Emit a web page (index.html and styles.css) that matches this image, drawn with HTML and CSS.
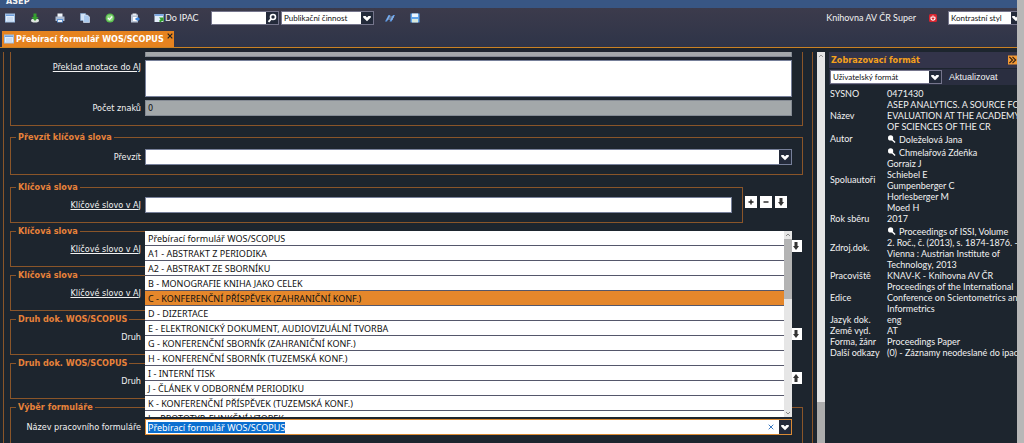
FILE: index.html
```html
<!DOCTYPE html>
<html lang="cs">
<head>
<meta charset="utf-8">
<title>ASEP</title>
<link rel="stylesheet" href="styles.css">
</head>
<body>
<svg class="defs" aria-hidden="true">
  <symbol id="chev" viewBox="0 0 10 10"><path d="M1.2 3h2.4L5 4.4 6.400 3h2.400v1.600L5 8.200 1.200 4.600z" fill="#fff"/></symbol>
  <symbol id="down" viewBox="0 0 10 10"><path d="M3.500 1h3v4H8L5 9 2 5h1.500z" fill="#333"/></symbol>
  <symbol id="up" viewBox="0 0 10 10"><path d="M3.500 9h3V5H8L5 1 2 5h1.500z" fill="#333"/></symbol>
  <symbol id="plus" viewBox="0 0 10 10"><path d="M4.300 2.500h1.400v1.800h1.800v1.400H5.700v1.800H4.300V5.700H2.500V4.300h1.800z" fill="#222"/></symbol>
  <symbol id="minus" viewBox="0 0 10 10"><path d="M2.500 4.300h5v1.400h-5z" fill="#222"/></symbol>
  <symbol id="mag" viewBox="0 0 10 10"><circle cx="4" cy="3.800" r="2.900" fill="#fff"/><path d="M5.500 5.500L9 9" stroke="#fff" stroke-width="1.500"/></symbol>
  <symbol id="win" viewBox="0 0 10 10"><rect x=".5" y="1" width="9" height="8" fill="#e4effb" stroke="#9fbfe4"/><path d="M1 1.500h8v1.500H1z" fill="#6f9fdc"/><path d="M2 5h6M2 7h6" stroke="#b4cdec"/></symbol>
</svg>
<div class="app">
  <header class="titlebar"><span>ASEP</span></header>
  <div class="top">
    <div class="toolbar">
      <div class="tools">
        <button class="tool" aria-label="Formulář"><svg><use href="#win"/></svg></button>
        <button class="tool" aria-label="Stáhnout"><svg viewBox="0 0 10 10"><ellipse cx="5" cy="7.600" rx="4" ry="2" fill="#dfe6e0"/><path d="M3.500.5h3V4h2L5 8 1.500 4h2z" fill="#35a02f"/></svg></button>
        <button class="tool" aria-label="Tisk"><svg viewBox="0 0 10 10"><path d="M2.500.5h5V4h-5z" fill="#f1f6fb"/><path d="M.5 3.500h9V8h-9z" fill="#aebdd2"/><path d="M2 6h6v3.500H2z" fill="#5e93d4"/><path d="M3 7h4v2H3z" fill="#e7f0fa"/></svg></button>
        <button class="tool" aria-label="Kopírovat"><svg viewBox="0 0 10 10"><path d="M.5.5h5v7h-5z" fill="#cfe2f7" stroke="#85acd8" stroke-width=".6"/><path d="M3.500 2h4L9.500 4v5.500h-6z" fill="#a9c9ee" stroke="#e5f0fc" stroke-width=".6"/></svg></button>
        <button class="tool" aria-label="Potvrdit"><svg viewBox="0 0 10 10"><circle cx="5" cy="5" r="4.500" fill="#58bd4c"/><circle cx="5" cy="5" r="3.300" fill="#8ad77d"/><path d="M3 5l1.500 1.600L7.200 3.500" fill="none" stroke="#fff" stroke-width="1.300"/></svg></button>
        <button class="tool" aria-label="Schránka"><svg viewBox="0 0 10 10"><path d="M1 1.500h7v8H1z" fill="#b8c3d4"/><path d="M2.500.5h4v2h-4z" fill="#e9edf4"/><path d="M3 4h3.500v4H3z" fill="#fff"/><path d="M5.500 5h2V3.500L10 6 7.500 8.500V7h-2z" fill="#3f86dc"/></svg></button>
        <button class="tool wide"><svg viewBox="0 0 10 10"><path d="M.5 1h9v8h-9z" fill="#e3eefb"/><path d="M.5 1h9v2h-9z" fill="#7fa9e0"/><path d="M5 4.500h4.500V9L8.200 7.800 6.500 9.500 5 8l1.600-1.700z" fill="#33a12c"/></svg>Do IPAC</button>
      </div>
      <div class="box search"><input type="text" aria-label="Hledat"><button aria-label="Hledat"><svg viewBox="0 0 10 10"><circle cx="6" cy="4" r="2.500" fill="none" stroke="#fff" stroke-width="1.600"/><path d="M4.200 5.800L1.500 8.800" stroke="#fff" stroke-width="1.800"/></svg></button></div>
      <div class="box kind"><select aria-label="Databáze"><option>Publikační činnost</option></select><span class="arr"><svg><use href="#chev"/></svg></span></div>
      <div class="tools end">
        <button class="tool" aria-label="Porovnat"><svg viewBox="0 0 10 10"><path d="M0 8.500L3.500 2h2L2 8.500zM4.500 8.500L8 2h2L6.500 8.500z" fill="#5f9be6"/><path d="M2 6h6M3 4h6" stroke="#a9cbf3" stroke-width=".8"/></svg></button>
        <button class="tool" aria-label="Uložit"><svg viewBox="0 0 10 10"><path d="M.5.5h9v9h-9z" fill="#5fa3ea"/><path d="M2 .5h6V4H2z" fill="#e9f4ff"/><path d="M2 6h6v3.500H2z" fill="#d8e9dc"/></svg></button>
      </div>
      <span class="user">Knihovna AV ČR Super</span>
      <button class="tool power" aria-label="Odhlásit"><svg viewBox="0 0 10 10"><rect x="1" y="1" width="8" height="8" rx="1.500" fill="#d62530"/><path d="M3.600 3.800a2 2 0 1 0 2.800 0M5 2.500v2.500" fill="none" stroke="#fff" stroke-width="1.200"/></svg></button>
      <div class="box style"><select aria-label="Styl"><option>Kontrastní styl</option></select><span class="arr"><svg><use href="#chev"/></svg></span></div>
    </div>
    <div class="tabs"><div class="tab"><svg><use href="#win"/></svg><span>Přebírací formulář WOS/SCOPUS</span><button aria-label="Zavřít"><svg viewBox="0 0 6 6"><path d="M.7.7l4.600 4.600M5.300.7L.7 5.300" stroke="#222" stroke-width="1.200"/></svg></button></div></div>
  </div>
  <main class="main">
    <form class="form">
      <div class="page">
        <fieldset class="annot">
          <div class="row"><label for="n1">Počet znaků</label><input id="n1" class="grey" value="0" readonly></div>
          <div class="row tall"><label for="an"><u>Překlad anotace do AJ</u></label><textarea id="an"></textarea></div>
          <div class="row"><label for="n2">Počet znaků</label><input id="n2" class="grey" value="0" readonly></div>
        </fieldset>
        <fieldset class="full">
          <legend>Převzít klíčová slova</legend>
          <div class="row"><label for="pr">Převzít</label><div class="combo"><input id="pr"><button type="button" aria-label="Otevřít"><svg><use href="#chev"/></svg></button></div></div>
        </fieldset>
        <div class="line">
          <fieldset><legend>Klíčová slova</legend><div class="row"><label for="k1"><u>Klíčové slovo v AJ</u></label><input id="k1"></div></fieldset>
          <div class="acts"><button type="button" aria-label="Přidat"><svg><use href="#plus"/></svg></button><button type="button" aria-label="Odebrat"><svg><use href="#minus"/></svg></button><button type="button" aria-label="Dolů"><svg><use href="#down"/></svg></button></div>
        </div>
        <div class="line">
          <fieldset><legend>Klíčová slova</legend><div class="row"><label for="k2"><u>Klíčové slovo v AJ</u></label><input id="k2"></div></fieldset>
          <div class="acts"><button type="button" aria-label="Přidat"><svg><use href="#plus"/></svg></button><button type="button" aria-label="Odebrat"><svg><use href="#minus"/></svg></button><button type="button" aria-label="Nahoru"><svg><use href="#up"/></svg></button><button type="button" aria-label="Dolů"><svg><use href="#down"/></svg></button></div>
        </div>
        <div class="line">
          <fieldset><legend>Klíčová slova</legend><div class="row"><label for="k3"><u>Klíčové slovo v AJ</u></label><input id="k3"></div></fieldset>
          <div class="acts"><button type="button" aria-label="Přidat"><svg><use href="#plus"/></svg></button><button type="button" aria-label="Odebrat"><svg><use href="#minus"/></svg></button><button type="button" aria-label="Nahoru"><svg><use href="#up"/></svg></button></div>
        </div>
        <div class="line">
          <fieldset><legend>Druh dok. WOS/SCOPUS</legend><div class="row"><label for="d1">Druh</label><input id="d1"></div></fieldset>
          <div class="acts"><button type="button" aria-label="Hledat"><svg><use href="#plus"/></svg></button><button type="button" aria-label="Přidat"><svg><use href="#plus"/></svg></button><button type="button" aria-label="Odebrat"><svg><use href="#minus"/></svg></button><button type="button" aria-label="Dolů"><svg><use href="#down"/></svg></button></div>
        </div>
        <div class="line">
          <fieldset><legend>Druh dok. WOS/SCOPUS</legend><div class="row"><label for="d2">Druh</label><input id="d2"></div></fieldset>
          <div class="acts"><button type="button" aria-label="Hledat"><svg><use href="#plus"/></svg></button><button type="button" aria-label="Přidat"><svg><use href="#plus"/></svg></button><button type="button" aria-label="Odebrat"><svg><use href="#minus"/></svg></button><button type="button" aria-label="Nahoru"><svg><use href="#up"/></svg></button></div>
        </div>
        <fieldset class="full">
          <legend>Výběr formuláře</legend>
          <div class="row"><label for="wf">Název pracovního formuláře</label>
            <div class="combo open">
              <input id="wf" value="Přebírací formulář WOS/SCOPUS" spellcheck="false">
              <button type="button" class="clear" aria-label="Vymazat"><svg viewBox="0 0 6 6"><path d="M.7.7l4.600 4.600M5.300.7L.7 5.300" stroke="#3a78c0"/></svg></button>
              <button type="button" aria-label="Otevřít"><svg><use href="#chev"/></svg></button>
              <div class="menu">
                <ul>
                  <li>Přebírací formulář WOS/SCOPUS</li>
                  <li>A1 - ABSTRAKT Z PERIODIKA</li>
                  <li>A2 - ABSTRAKT ZE SBORNÍKU</li>
                  <li>B - MONOGRAFIE KNIHA JAKO CELEK</li>
                  <li class="on">C - KONFERENČNÍ PŘÍSPĚVEK (ZAHRANIČNÍ KONF.)</li>
                  <li>D - DIZERTACE</li>
                  <li>E - ELEKTRONICKÝ DOKUMENT, AUDIOVIZUÁLNÍ TVORBA</li>
                  <li>G - KONFERENČNÍ SBORNÍK (ZAHRANIČNÍ KONF.)</li>
                  <li>H - KONFERENČNÍ SBORNÍK (TUZEMSKÁ KONF.)</li>
                  <li>I - INTERNÍ TISK</li>
                  <li>J - ČLÁNEK V ODBORNÉM PERIODIKU</li>
                  <li>K - KONFERENČNÍ PŘÍSPĚVEK (TUZEMSKÁ KONF.)</li>
                  <li>L - PROTOTYP, FUNKČNÍ VZOREK</li>
                </ul>
                <div class="bar"><svg viewBox="0 0 8 8"><path d="M2 5l2-2 2 2" fill="none" stroke="#888"/></svg><i></i><svg viewBox="0 0 8 8"><path d="M2 3l2 2 2-2" fill="none" stroke="#888"/></svg></div>
              </div>
            </div>
          </div>
        </fieldset>
      </div>
    </form>
    <div class="scroll"><svg viewBox="0 0 8 8"><path d="M2 5l2-2 2 2" fill="none" stroke="#999"/></svg><i></i></div>
    <aside class="side">
      <h2><span>Zobrazovací formát</span><button aria-label="Sbalit"><svg viewBox="0 0 10 10"><rect width="10" height="10" fill="#f59a35"/><path d="M1.500 1.500L5 5 1.500 8.500M5 1.500L8.500 5 5 8.500" fill="none" stroke="#3a2410" stroke-width="1.400"/></svg></button></h2>
      <div class="fmt"><div class="box"><select aria-label="Formát"><option>Uživatelský formát</option></select><span class="arr"><svg><use href="#chev"/></svg></span></div><button>Aktualizovat</button></div>
      <table>
        <tr><th>SYSNO</th><td>0471430</td></tr>
        <tr><th>Název</th><td>ASEP ANALYTICS. A SOURCE FOR<br>EVALUATION AT THE ACADEMY<br>OF SCIENCES OF THE CR</td></tr>
        <tr><th>Autor</th><td><div class="ref"><svg><use href="#mag"/></svg>Doleželová Jana</div></td></tr>
        <tr><th>Spoluautoři</th><td><div class="ref"><svg><use href="#mag"/></svg>Chmelařová Zdeňka</div>Gorraiz J<br>Schiebel E<br>Gumpenberger C<br>Horlesberger M<br>Moed H</td></tr>
        <tr><th>Rok sběru</th><td>2017</td></tr>
        <tr><th>Zdroj.dok.</th><td><div class="ref"><svg><use href="#mag"/></svg>Proceedings of ISSI, Volume</div>2. Roč., č. (2013), s. 1874-1876. -<br>Vienna : Austrian Institute of<br>Technology, 2013</td></tr>
        <tr><th>Pracoviště</th><td>KNAV-K - Knihovna AV ČR</td></tr>
        <tr><th>Edice</th><td>Proceedings of the International<br>Conference on Scientometrics and<br>Informetrics</td></tr>
        <tr><th>Jazyk dok.</th><td>eng</td></tr>
        <tr><th>Země vyd.</th><td>AT</td></tr>
        <tr><th>Forma, žánr</th><td>Proceedings Paper</td></tr>
        <tr><th>Další odkazy</th><td>(0) - Záznamy neodeslané do ipac</td></tr>
      </table>
    </aside>
  </main>
</div>
<script src="main.js"></script>
</body>
</html>
```
FILE: styles.css
```css
* { box-sizing: border-box; }
body { margin: 0; background: #b7b7b7; color: #f2f2f2; font: 9px/11px "DejaVu Sans Condensed", "Noto Sans", sans-serif; }
button, input, select, textarea { font: inherit; margin: 0; padding: 0; border: 0; border-radius: 0; outline: 0; background: none; color: inherit; }
select { appearance: none; }
svg { display: block; flex: none; width: 10px; height: 10px; }
.defs { position: absolute; width: 0; height: 0; }
.app { display: flex; flex-direction: column; height: 100vh; margin-right: 7px; overflow: hidden; background: #1d252e; }

.titlebar { display: flex; align-items: flex-end; height: 8px; padding-left: 6px; overflow: hidden; background: #385684; font-weight: bold; line-height: 12px; }
.titlebar span { margin-bottom: 1px; }
.top { display: flex; flex-direction: column; height: 40px; background: linear-gradient(#3c3b4c, #2e3448); border-bottom: 1px solid #c98224; }
.toolbar { display: flex; align-items: center; height: 23px; padding: 0 0 4px 5px; font-family: Lato, sans-serif; }
.tools { display: flex; gap: 15px; width: 206px; }
.tools.end { width: auto; margin-left: 11px; }
.tool { display: flex; align-items: center; gap: 1px; white-space: nowrap; }
.wide { margin-left: -1px; }
.box { display: flex; height: 14px; border: 1px solid #75758c; background: #fff; color: #111; font: 8px/12px Lato, sans-serif; }
.box input, .box select { flex: 1; min-width: 0; padding-left: 2px; }
.box button, .arr { display: flex; align-items: center; justify-content: center; width: 12px; background: #232a3a; }
.search { width: 68px; margin-right: 2px; }
.kind { width: 93px; }
.user { margin-left: auto; }
.power { margin: 0 10px 0 12px; }
.style { width: 69px; border-right: 0; }
.style .arr { width: 6px; overflow: hidden; justify-content: flex-start; }
.tabs { display: flex; flex: 1; padding-left: 2px; }
.tab { display: flex; align-items: center; padding-left: 2px; gap: 2px; background: #e6831f; color: #fff; font-weight: bold; }
.tab button { align-self: flex-start; padding: 2px 1px; }
.tab button svg { width: 6px; height: 6px; }

.main { display: flex; flex: 1; min-height: 0; padding-top: 4px; }
.form { flex: 1; min-width: 0; overflow: hidden; padding: 0 4px 0 3px; }
.page { padding: 0 9px 0 6px; border: solid #8a5529; border-width: 0 1px; }
fieldset { flex: 1; min-width: 0; margin: 0; padding: 4px 10px 9px; border: 1px solid #8a5529; }
legend { margin-left: -5px; padding: 0 2px; color: #e8823a; font-weight: bold; line-height: 12px; }
.annot { display: flex; flex-direction: column; gap: 3px; margin: -11px 0 5px; padding: 0 10px 9px; border-top: 0; }
.full { margin-bottom: 6px; padding-top: 6px; }
.row { display: flex; height: 16px; align-items: center; }
.row.tall { height: 37px; align-items: flex-start; }
.tall label { padding-top: 2px; }
.row label { flex: none; width: 120px; margin-right: 4px; text-align: right; white-space: nowrap; }
.row > input, .row > textarea, .combo { flex: 1; align-self: stretch; min-width: 0; border: 1px solid #77809a; background: #fff; color: #111; padding-left: 2px; resize: none; }
.row > .grey { background: #a3a8aa; border-color: #858b94; }
.combo { display: flex; align-items: center; position: relative; }
.combo input { flex: 1; min-width: 0; }
.combo button { display: flex; align-items: center; justify-content: center; align-self: stretch; width: 12px; background: #232a3a; }
.combo .clear { width: 17px; background: #fff; }
.clear svg { width: 6px; height: 6px; }
.open { border-color: #d98a35; font-family: "Noto Sans", sans-serif; }
.open input::selection { background: #0b6fd0; color: #fff; }
.line { display: flex; margin-bottom: 2px; }
.acts { display: flex; gap: 3px; width: 60px; padding: 15px 0 0 2px; }
.acts button { display: flex; align-items: center; justify-content: center; flex: none; width: 12px; height: 12px; background: #fff; }

.menu { position: absolute; left: -1px; right: -1px; bottom: calc(100% + 3px); z-index: 2; display: flex; height: 186px; overflow: hidden; background: #fff; color: #111; }
.menu ul { flex: 1; margin: 0; padding: 0; list-style: none; }
.menu li { height: 15px; padding-left: 3px; border-bottom: 1px solid #55576b; line-height: 15px; }
.menu .on { background: #e5872b; }
.bar { display: flex; flex-direction: column; width: 8px; background: #e6e6e6; }
.bar svg, .scroll svg { width: 8px; height: 8px; }
.bar i { height: 60px; margin-bottom: auto; background: #b4b4b4; }
.scroll { display: flex; flex-direction: column; width: 8px; background: #e6e6e6; }
.scroll i { height: 41px; margin-top: auto; background: #adadad; }

.side { width: 188px; margin-left: 4px; overflow: hidden; }
.side h2 { display: flex; align-items: center; justify-content: space-between; height: 16px; margin: 0 0 1px; padding-left: 2px; background: #33344a; color: #f5a11c; font-size: 9px; }
.side h2 svg { width: 9px; }
.fmt { display: flex; align-items: center; gap: 7px; height: 16px; padding-left: 1px; margin-bottom: 3px; background: #2a2e40; font-family: "Liberation Sans", sans-serif; }
.fmt .box { width: 112px; }
table { border-collapse: collapse; white-space: nowrap; font-family: Lato, sans-serif; }
th, td { padding: 0; text-align: left; font-weight: normal; }
th { min-width: 58px; padding-left: 1px; }
.ref { display: flex; align-items: center; gap: 3px; height: 13px; padding-top: 2px; }
.ref svg { align-self: flex-start; width: 9px; }
```
FILE: main.js
```js
const field = document.getElementById('wf');
field.focus({ preventScroll: true });
field.select();
```
